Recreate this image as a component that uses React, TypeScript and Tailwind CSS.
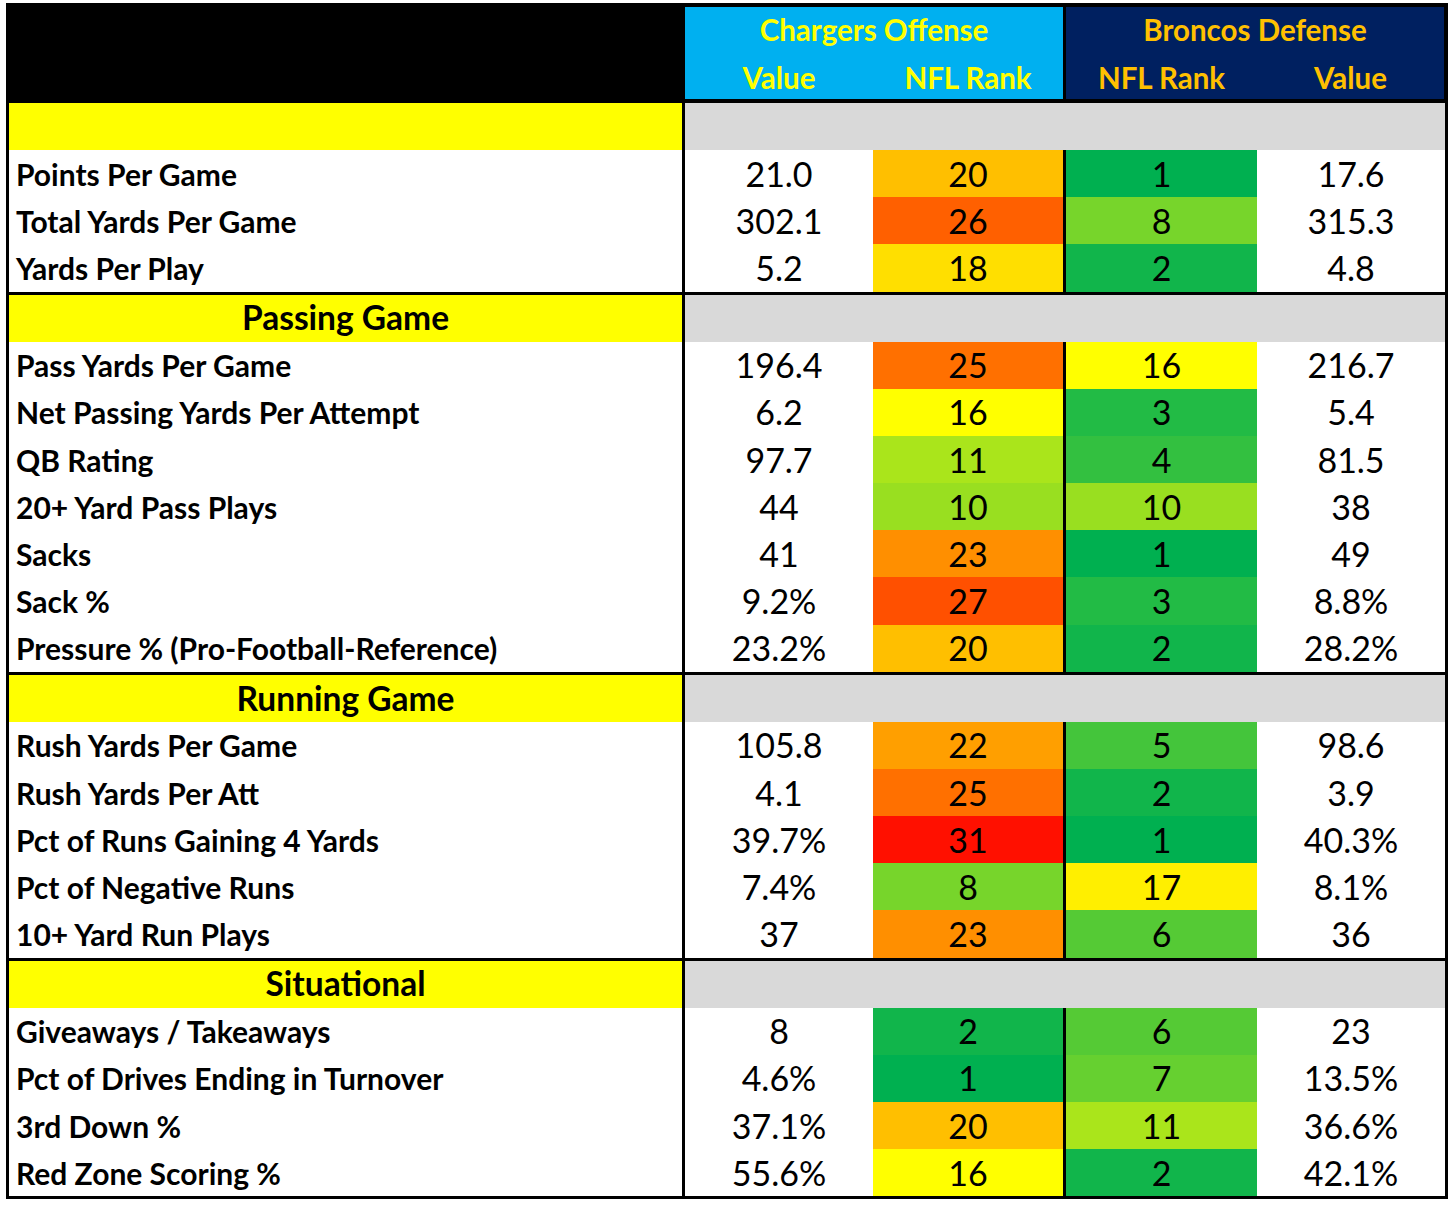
import React from "react";

type Row = { label: string; ov: string; or: number; dr: number; dv: string };
type Section = { title: string; rows: Row[] };

const rankBg: Record<number, string> = {
  1: "bg-[#00B050]",
  2: "bg-[#11B54B]",
  3: "bg-[#22BB45]",
  4: "bg-[#33C040]",
  5: "bg-[#44C53B]",
  6: "bg-[#55CA35]",
  7: "bg-[#66D030]",
  8: "bg-[#77D52B]",
  10: "bg-[#99DF20]",
  11: "bg-[#AAE51B]",
  16: "bg-[#FFFF00]",
  17: "bg-[#FFEF00]",
  18: "bg-[#FFDF00]",
  20: "bg-[#FFBF00]",
  22: "bg-[#FF9F00]",
  23: "bg-[#FF8F00]",
  25: "bg-[#FF7000]",
  26: "bg-[#FF6000]",
  27: "bg-[#FF5000]",
  31: "bg-[#FF1000]",
};

const sections: Section[] = [
  {
    title: "",
    rows: [
      { label: "Points Per Game", ov: "21.0", or: 20, dr: 1, dv: "17.6" },
      { label: "Total Yards Per Game", ov: "302.1", or: 26, dr: 8, dv: "315.3" },
      { label: "Yards Per Play", ov: "5.2", or: 18, dr: 2, dv: "4.8" },
    ],
  },
  {
    title: "Passing Game",
    rows: [
      { label: "Pass Yards Per Game", ov: "196.4", or: 25, dr: 16, dv: "216.7" },
      { label: "Net Passing Yards Per Attempt", ov: "6.2", or: 16, dr: 3, dv: "5.4" },
      { label: "QB Rating", ov: "97.7", or: 11, dr: 4, dv: "81.5" },
      { label: "20+ Yard Pass Plays", ov: "44", or: 10, dr: 10, dv: "38" },
      { label: "Sacks", ov: "41", or: 23, dr: 1, dv: "49" },
      { label: "Sack %", ov: "9.2%", or: 27, dr: 3, dv: "8.8%" },
      { label: "Pressure % (Pro-Football-Reference)", ov: "23.2%", or: 20, dr: 2, dv: "28.2%" },
    ],
  },
  {
    title: "Running Game",
    rows: [
      { label: "Rush Yards Per Game", ov: "105.8", or: 22, dr: 5, dv: "98.6" },
      { label: "Rush Yards Per Att", ov: "4.1", or: 25, dr: 2, dv: "3.9" },
      { label: "Pct of Runs Gaining 4 Yards", ov: "39.7%", or: 31, dr: 1, dv: "40.3%" },
      { label: "Pct of Negative Runs", ov: "7.4%", or: 8, dr: 17, dv: "8.1%" },
      { label: "10+ Yard Run Plays", ov: "37", or: 23, dr: 6, dv: "36" },
    ],
  },
  {
    title: "Situational",
    rows: [
      { label: "Giveaways / Takeaways", ov: "8", or: 2, dr: 6, dv: "23" },
      { label: "Pct of Drives Ending in Turnover", ov: "4.6%", or: 1, dr: 7, dv: "13.5%" },
      { label: "3rd Down %", ov: "37.1%", or: 20, dr: 11, dv: "36.6%" },
      { label: "Red Zone Scoring %", ov: "55.6%", or: 16, dr: 2, dv: "42.1%" },
    ],
  },
];

const font = { fontFamily: "Lato, 'Liberation Sans', sans-serif" };

function DataRow({ r }: { r: Row }) {
  return (
    <div className="flex h-[47.15px]">
      <div className="flex w-[673px] items-center bg-white pl-[7px] text-[30px] font-bold leading-none text-black">
        {r.label}
      </div>
      <div className="flex w-[191px] items-center justify-center border-l-[3px] border-black bg-white text-[34px] leading-none text-black">
        {r.ov}
      </div>
      <div
        className={`flex w-[190px] items-center justify-center text-[34px] leading-none text-black ${rankBg[r.or]}`}
      >
        {r.or}
      </div>
      <div
        className={`flex w-[194px] items-center justify-center border-l-[3px] border-black text-[34px] leading-none text-black ${rankBg[r.dr]}`}
      >
        {r.dr}
      </div>
      <div className="flex w-[188px] items-center justify-center bg-white text-[34px] leading-none text-black">
        {r.dv}
      </div>
    </div>
  );
}

function SectionRow({ title, first }: { title: string; first: boolean }) {
  return (
    <div
      className={
        first
          ? "flex h-[47.15px]"
          : "flex h-[50.15px] border-t-[3px] border-black"
      }
    >
      <div className="flex w-[673px] items-center justify-center bg-[#FFFF00] text-[33.5px] font-bold leading-none text-black">
        {title}
      </div>
      <div className="w-[763px] border-l-[3px] border-black bg-[#D9D9D9]" />
    </div>
  );
}

export default function App() {
  return (
    <div className="min-h-[1206px] w-[1456px] bg-white pl-[6px] pt-[3px]" style={font}>
      <div className="w-[1442px] border-[3px] border-black bg-black">
        {/* header */}
        <div className="flex h-[97px] bg-black pt-[1px] pb-[4px]">
          <div className="w-[676px]" />
          <div className="flex w-[378px] flex-col bg-[#00B0F0] text-[29.5px] font-bold leading-none text-[#FFFF00]">
            <div className="flex h-[45px] items-center justify-center">Chargers Offense</div>
            <div className="flex h-[47px] items-center pt-[5px]">
              <div className="flex w-[188px] justify-center">Value</div>
              <div className="flex w-[190px] justify-center">NFL Rank</div>
            </div>
          </div>
          <div className="w-[3px]" />
          <div className="flex w-[378px] flex-col bg-[#002060] text-[29.5px] font-bold leading-none text-[#FFC000]">
            <div className="flex h-[45px] items-center justify-center">Broncos Defense</div>
            <div className="flex h-[47px] items-center pt-[5px]">
              <div className="flex w-[191px] justify-center">NFL Rank</div>
              <div className="flex w-[187px] justify-center">Value</div>
            </div>
          </div>
        </div>
        {/* body */}
        {sections.map((s, i) => (
          <div key={i}>
            <SectionRow title={s.title} first={i === 0} />
            {s.rows.map((r) => (
              <DataRow key={r.label} r={r} />
            ))}
          </div>
        ))}
      </div>
    </div>
  );
}
